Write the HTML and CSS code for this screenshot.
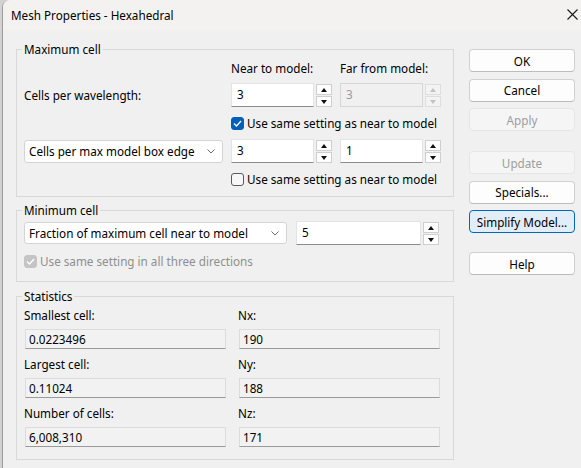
FILE: index.html
```html
<!DOCTYPE html>
<html>
<head>
<meta charset="utf-8">
<title>Mesh Properties - Hexahedral</title>
<link rel="stylesheet" href="styles.css">
</head>
<body>
<div class="window">
  <div class="titlebar">
    <span class="title">Mesh Properties - Hexahedral</span>
    <svg class="close" width="11" height="11" viewBox="0 0 11 11"><path d="M0.5 0.5 L10.5 10.5 M10.5 0.5 L0.5 10.5" stroke="#1a1a1a" stroke-width="1.1" fill="none"/></svg>
  </div>
  <div class="content">
    <div class="groups">
      <fieldset class="group group-max">
        <legend>Maximum cell</legend>
        <div class="max-grid">
          <span></span>
          <span class="col-head">Near to model:</span>
          <span class="col-head">Far from model:</span>

          <span class="label">Cells per wavelength:</span>
          <div class="spin">
            <div class="spin-input">3</div>
            <div class="spinner"><span class="sb up"></span><span class="sb down"></span></div>
          </div>
          <div class="spin disabled">
            <div class="spin-input">3</div>
            <div class="spinner"><span class="sb up"></span><span class="sb down"></span></div>
          </div>

          <span></span>
          <label class="check span2"><span class="box checked"><svg width="9" height="7" viewBox="0 0 9 7"><path d="M1 3.5 L3.5 6 L8 1" stroke="#fff" stroke-width="1.3" fill="none"/></svg></span>Use same setting as near to model</label>

          <div class="combo combo-max"><span>Cells per max model box edge</span><svg width="8" height="5" viewBox="0 0 8 5"><path d="M0.5 0.5 L4 4 L7.5 0.5" stroke="#6b6b6b" stroke-width="1" fill="none"/></svg></div>
          <div class="spin">
            <div class="spin-input">3</div>
            <div class="spinner"><span class="sb up"></span><span class="sb down"></span></div>
          </div>
          <div class="spin">
            <div class="spin-input">1</div>
            <div class="spinner"><span class="sb up"></span><span class="sb down"></span></div>
          </div>

          <span></span>
          <label class="check span2"><span class="box"></span>Use same setting as near to model</label>
        </div>
      </fieldset>

      <fieldset class="group group-min">
        <legend>Minimum cell</legend>
        <div class="min-row">
          <div class="combo combo-min"><span>Fraction of maximum cell near to model</span><svg width="8" height="5" viewBox="0 0 8 5"><path d="M0.5 0.5 L4 4 L7.5 0.5" stroke="#6b6b6b" stroke-width="1" fill="none"/></svg></div>
          <div class="spin spin-wide">
            <div class="spin-input">5</div>
            <div class="spinner"><span class="sb up"></span><span class="sb down"></span></div>
          </div>
        </div>
        <label class="check check-disabled"><span class="box checked-disabled"><svg width="9" height="7" viewBox="0 0 9 7"><path d="M1 3.5 L3.5 6 L8 1" stroke="#fff" stroke-width="1.3" fill="none"/></svg></span>Use same setting in all three directions</label>
      </fieldset>

      <fieldset class="group group-stats">
        <legend>Statistics</legend>
        <div class="stats-grid">
          <div class="stat"><span class="label">Smallest cell:</span><div class="field">0.0223496</div></div>
          <div class="stat"><span class="label">Nx:</span><div class="field">190</div></div>
          <div class="stat"><span class="label">Largest cell:</span><div class="field">0.11024</div></div>
          <div class="stat"><span class="label">Ny:</span><div class="field">188</div></div>
          <div class="stat"><span class="label">Number of cells:</span><div class="field">6,008,310</div></div>
          <div class="stat"><span class="label">Nz:</span><div class="field">171</div></div>
        </div>
      </fieldset>
    </div>

    <div class="buttons">
      <button class="btn">OK</button>
      <button class="btn">Cancel</button>
      <button class="btn" disabled>Apply</button>
      <button class="btn sep" disabled>Update</button>
      <button class="btn">Specials...</button>
      <button class="btn focused">Simplify Model...</button>
      <button class="btn sep2">Help</button>
    </div>
  </div>
</div>
</body>
</html>
```

FILE: styles.css
```css
* { box-sizing: border-box; }
html, body { margin: 0; padding: 0; }
body {
  background: #d2d2d2;
  font-family: "Noto Sans", "Open Sans", sans-serif;
  font-size: 11.7px;
  color: #000;
  overflow: hidden;
  width: 581px;
  height: 468px;
}
.window {
  margin-left: 2px;
  height: 468px;
  background: #f0f0f0;
  border-left: 1px solid #9c9c9c;
  border-top-left-radius: 8px;
  overflow: hidden;
}
.titlebar {
  height: 30px;
  display: flex;
  align-items: center;
  justify-content: space-between;
  padding: 0 3px 0 8px;
  background: #f3f2f0;
}
.title { line-height: 16px; }
.close { display: block; margin-top: -1px; }

.content {
  display: flex;
  align-items: flex-start;
  padding: 11px 0 0 13px;
  gap: 15px;
}
.groups { width: 438px; }

.group {
  margin: 0;
  border: 1px solid #d8d8d8;
  min-width: 0;
}
.group legend {
  padding: 0 2px;
  margin-left: -2px;
  line-height: 16px;
}
.group-max { padding: 3px 7px 9px; }
.group-min { margin-top: 5px; padding: 3px 7px 12px; }
.group-stats { margin-top: 6px; padding: 3px 7px 12px; }

.label, .col-head { line-height: 16px; white-space: nowrap; }

.max-grid {
  display: grid;
  grid-template-columns: 207px 109px 101px;
  grid-template-rows: 15px 24px 16px 24px 16px;
  row-gap: 8px;
  align-items: center;
}
.span2 { grid-column: span 2; }

/* spin box */
.spin { display: flex; gap: 1px; height: 24px; width: 101px; }
.spin-input {
  width: 83px;
  height: 24px;
  background: #fff;
  border: 1px solid #e3e3e3;
  border-bottom: 1px solid #8c8c8c;
  padding: 0 0 0 5px;
  line-height: 21px;
}
.spinner {
  width: 17px;
  display: flex;
  flex-direction: column;
  gap: 1px;
  padding: 1px 0 0 1px;
}
.sb {
  flex: 1;
  display: flex;
  align-items: center;
  justify-content: center;
  background: #fdfdfd;
  border: 1px solid #cfcfcf;
}
.sb.up::after {
  content: "";
  border-left: 3px solid transparent;
  border-right: 3px solid transparent;
  border-bottom: 4px solid #111;
}
.sb.down::after {
  content: "";
  border-left: 3px solid transparent;
  border-right: 3px solid transparent;
  border-top: 4px solid #111;
}
.spin.disabled .spin-input {
  background: #f0f0f0;
  border: 1px solid #d6d6d6;
  color: #9a9a9a;
}
.spin.disabled .sb { background: #f3f3f3; border-color: #dedede; }
.spin.disabled .sb.up::after { border-bottom-color: #c2c2c2; }
.spin.disabled .sb.down::after { border-top-color: #c2c2c2; }
.spin-wide { width: 143px; }
.spin-wide .spin-input { width: 126px; }

/* checkbox */
.check {
  display: flex;
  align-items: center;
  gap: 3px;
  line-height: 16px;
  white-space: nowrap;
}
.box {
  width: 13px;
  height: 13px;
  border-radius: 3px;
  border: 1px solid #5a5a5a;
  background: #f7f7f7;
  display: flex;
  align-items: center;
  justify-content: center;
}
.box.checked { background: #005fb8; border-color: #005fb8; }
.box.checked-disabled { background: #c4c4c4; border-color: #c4c4c4; }
.check-disabled { color: #8f8f8f; margin-top: 8px; }

/* combo */
.combo {
  display: flex;
  align-items: center;
  justify-content: space-between;
  background: #fff;
  border: 1px solid #d4d4d4;
  border-radius: 3px;
  padding: 0 7px 0 4px;
  white-space: nowrap;
}
.combo svg { display: block; }
.combo-max { width: 199px; height: 23px; }
.min-row { display: flex; align-items: flex-start; gap: 9px; height: 24px; }
.combo-min { width: 263px; height: 22px; margin-top: 1px; }

/* statistics */
.stats-grid {
  display: grid;
  grid-template-columns: 214px 202px;
  row-gap: 7px;
}
.stat { display: flex; flex-direction: column; }
.stat .field {
  margin: 6px 0 0 1px;
  width: 201px;
  height: 20px;
  background: #f2f2f2;
  border: 1px solid #dcdcdc;
  border-bottom: 1px solid #9a9a9a;
  padding-left: 3px;
  line-height: 18px;
}

/* buttons */
.buttons {
  display: flex;
  flex-direction: column;
  gap: 6.5px;
  margin-top: 8px;
  width: 106px;
}
.btn {
  height: 23px;
  width: 106px;
  font-family: inherit;
  font-size: 11.7px;
  color: #000;
  background: #fdfdfd;
  border: 1px solid #d0d0d0;
  border-bottom-color: #bcbcbc;
  border-radius: 4px;
  padding: 0;
  line-height: 20px;
}
.btn:disabled {
  background: #f5f5f5;
  border-color: #e6e6e6;
  color: #9d9d9d;
}
.btn.focused {
  background: #e1eefa;
  border-color: #0067c0;
}
.btn.sep { margin-top: 13.5px; }
.btn.sep2 { margin-top: 12.5px; }
```
